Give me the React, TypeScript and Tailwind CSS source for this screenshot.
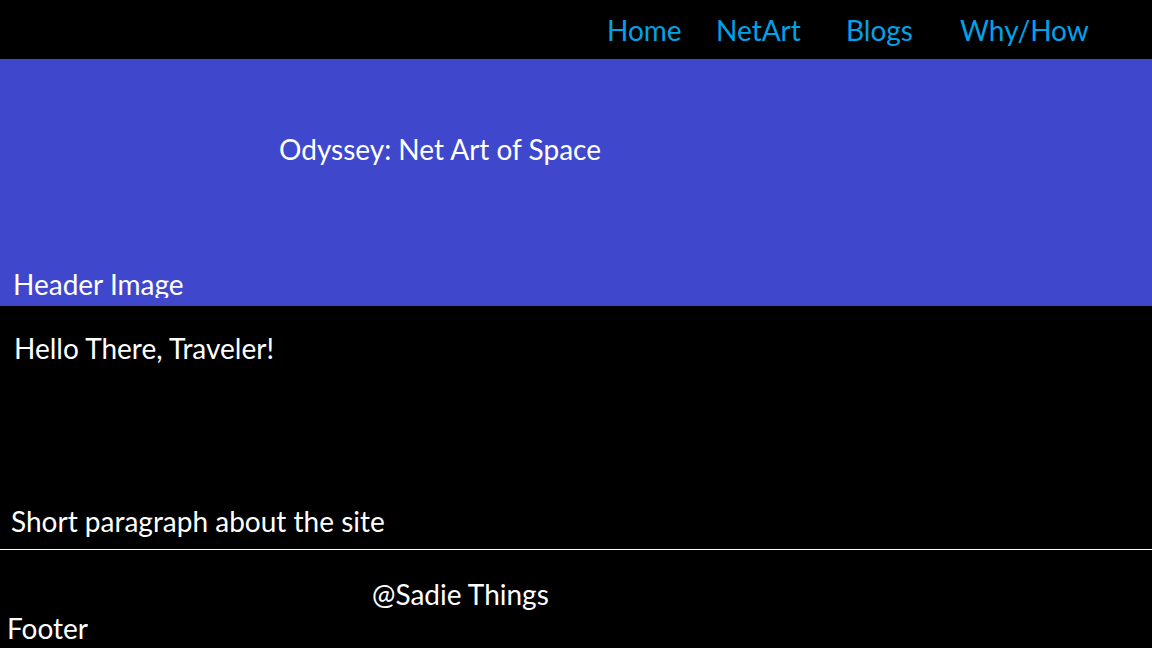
const font = { fontFamily: 'Lato, "Open Sans", sans-serif' }

const links = [
  { label: 'Home', w: 'w-[109px]' },
  { label: 'NetArt', w: 'w-[130px]' },
  { label: 'Blogs', w: 'w-[114px]' },
  { label: 'Why/How', w: 'w-[150px]' },
]

export default function App() {
  return (
    <div className="w-[1152px] h-[648px] bg-black text-white overflow-hidden text-[28px] leading-[34px]" style={font}>
      {/* nav */}
      <nav className="h-[59px] flex pl-[607px] pt-[13px]">
        {links.map((l) => (
          <a key={l.label} href="#" className={`${l.w} text-[#00a2e8]`}>
            {l.label}
          </a>
        ))}
      </nav>

      {/* header */}
      <header className="h-[247px] bg-[#3f48cc] flex flex-col pt-[73px] pb-[8px]">
        <h1 className="pl-[279px]">Odyssey: Net Art of Space</h1>
        <div className="mt-auto h-[31px] overflow-hidden pl-[13px]">Header Image</div>
      </header>

      {/* intro */}
      <section className="h-[244px] flex flex-col border-b border-white pt-[25px] pb-[11px]">
        <p className="pl-[14px]">Hello There, Traveler!</p>
        <p className="mt-auto pl-[11px]">Short paragraph about the site</p>
      </section>

      {/* footer */}
      <footer className="h-[98px] pt-[27px]">
        <p className="pl-[372px]">@Sadie Things</p>
        <p className="pl-[7px]">Footer</p>
      </footer>
    </div>
  )
}
